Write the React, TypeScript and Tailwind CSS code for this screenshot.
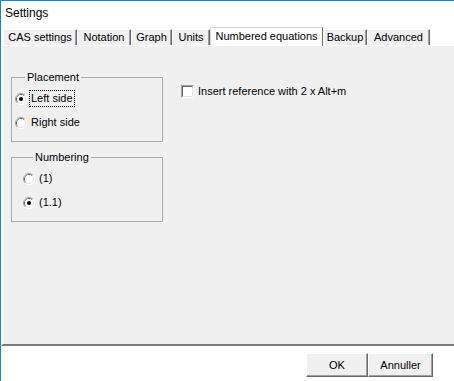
import React from "react";

const TABS = [
  { label: "CAS settings", width: "w-[74px]" },
  { label: "Notation", width: "w-[54px]" },
  { label: "Graph", width: "w-[41px]" },
  { label: "Units", width: "w-[38px]" },
  { label: "Numbered equations", width: "w-[113px]", active: true },
  { label: "Backup", width: "w-[44px]" },
  { label: "Advanced", width: "w-[63px]" },
];

function Radio({ checked }: { checked?: boolean }) {
  return (
    <svg width="12" height="12" viewBox="0 0 12 12" className="shrink-0">
      <path d="M2.11 9.89 A5.5 5.5 0 0 1 9.89 2.11" fill="none" stroke="#a0a0a0" strokeWidth="1" />
      <path d="M9.89 2.11 A5.5 5.5 0 0 1 2.11 9.89" fill="none" stroke="#ffffff" strokeWidth="1" />
      <path d="M2.82 9.18 A4.5 4.5 0 0 1 9.18 2.82" fill="none" stroke="#696969" strokeWidth="1" />
      <path d="M9.18 2.82 A4.5 4.5 0 0 1 2.82 9.18" fill="none" stroke="#e3e3e3" strokeWidth="1" />
      <circle cx="6" cy="6" r="4" fill="#ffffff" />
      {checked && <circle cx="6" cy="6" r="2" fill="#000000" />}
    </svg>
  );
}

function RadioRow({ label, checked, focused }: { label: string; checked?: boolean; focused?: boolean }) {
  return (
    <div className="h-[17px] flex items-center gap-[2px]">
      <Radio checked={checked} />
      <span
        className={`h-[17px] flex items-center px-[1px] border border-dotted ${
          focused ? "border-black" : "border-transparent"
        }`}
      >
        {label}
      </span>
    </div>
  );
}

function Button({ label, width }: { label: string; width: string }) {
  return (
    <button
      className={`${width} h-[24px] bg-[#f0f0f0] border-t border-l border-white border-r border-b border-r-[#696969] border-b-[#696969] shadow-[inset_-1px_-1px_0_#a0a0a0] flex items-center justify-center text-black`}
    >
      {label}
    </button>
  );
}

export default function App() {
  return (
    <div className="w-[454px] h-[381px] bg-white border-l border-t border-[#1883d7] flex flex-col font-['Liberation_Sans',sans-serif] text-[11px] leading-[13px] text-black overflow-hidden">
      {/* Title */}
      <div className="h-[24px] shrink-0 pl-[4px] pt-[5px] text-[12px] leading-[15px]">Settings</div>

      {/* Tabs */}
      <div className="h-[20px] shrink-0 flex items-end pl-[2px]">
        {TABS.map((tab) =>
          tab.active ? (
            <div
              key={tab.label}
              className={`${tab.width} h-[19px] -mb-[1px] relative z-10 bg-white border-t border-l border-[#d9d9d9] border-r border-r-[#696969] flex items-center justify-center pb-[1px]`}
            >
              {tab.label}
            </div>
          ) : (
            <div
              key={tab.label}
              className={`${tab.width} h-[16px] bg-[#f0f0f0] border-t border-l border-white border-r border-r-[#696969] shadow-[inset_-1px_0_0_#a0a0a0] flex items-center justify-center`}
            >
              {tab.label}
            </div>
          )
        )}
      </div>

      {/* Panel */}
      <div className="flex-1 bg-[#f0f0f0] border-t border-white border-l-2 border-l-white border-b-2 border-b-[#7a7a7a] flex pt-[25px] pl-[8px]">
        <div className="w-[152px] flex flex-col gap-[9px]">
          <fieldset className="h-[71px] border border-[#a9a9a9] pl-[3px] flex flex-col">
            <legend className="ml-[10px] px-[2px]">Placement</legend>
            <div className="mt-[6px] flex flex-col gap-[7px]">
              <RadioRow label="Left side" checked focused />
              <RadioRow label="Right side" />
            </div>
          </fieldset>
          <fieldset className="h-[71px] border border-[#a9a9a9] pl-[11px] flex flex-col">
            <legend className="ml-[10px] px-[2px]">Numbering</legend>
            <div className="mt-[6px] flex flex-col gap-[7px]">
              <RadioRow label="(1)" />
              <RadioRow label="(1.1)" checked />
            </div>
          </fieldset>
        </div>

        <div className="ml-[18px] mt-[14px] h-[13px] flex items-center gap-[4px] self-start">
          <div className="w-[13px] h-[13px] border-t border-l border-[#a0a0a0] border-r border-b border-r-white border-b-white">
            <div className="w-full h-full bg-white border-t border-l border-[#696969] border-r border-b border-r-[#e3e3e3] border-b-[#e3e3e3]" />
          </div>
          <span>Insert reference with 2 x Alt+m</span>
        </div>
      </div>

      {/* Footer */}
      <div className="h-[35px] shrink-0 flex justify-end items-start pt-[7px] pr-[21px]">
        <Button label="OK" width="w-[62px]" />
        <Button label="Annuller" width="w-[65px]" />
      </div>
    </div>
  );
}
